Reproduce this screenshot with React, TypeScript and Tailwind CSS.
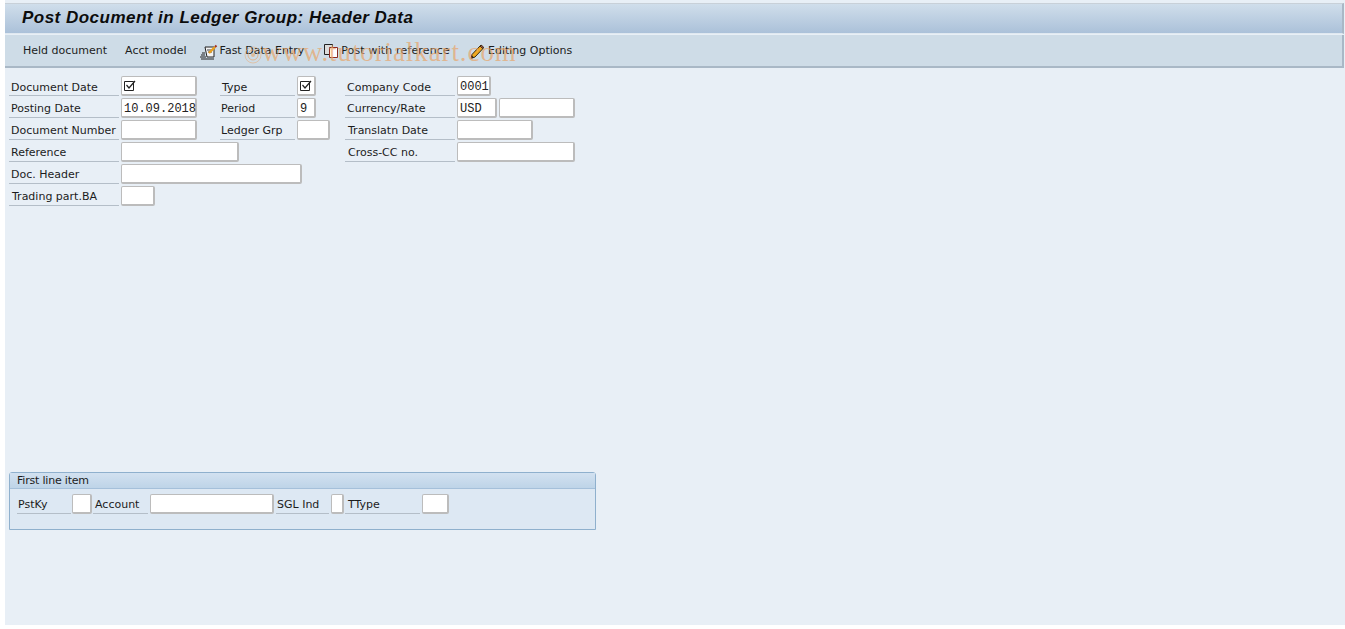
import type { ReactNode } from 'react';

const UI_FONT = "font-['DejaVu_Sans',sans-serif] text-[11px] text-[#1c1c1c]";

function Label({ width, children, className = '' }: { width: string; children: ReactNode; className?: string }) {
  return (
    <div className={`${width} h-5 shrink-0 border-b border-[#b4bec8] pt-[3px] leading-4 whitespace-nowrap ${className || 'pl-[2px]'}`}>
      {children}
    </div>
  );
}

function Field({ width, children, className = '' }: { width: string; children?: ReactNode; className?: string }) {
  return (
    <div
      className={`${width} h-5 shrink-0 rounded-[2px] border border-[#bcbcbc] border-b-2 border-r-2 bg-white pt-px pl-[2px] font-['Liberation_Mono',monospace] text-[12px] leading-[18px] whitespace-nowrap text-[#222222] ${className}`}
    >
      {children}
    </div>
  );
}

function CheckMark() {
  return (
    <svg className="mt-[2px]" width="12" height="12" viewBox="0 0 12 12" fill="none">
      <path d="M0.5 1.5H9.5V10.5H0.5Z" stroke="#222222" />
      <path d="M2.5 5L5 8L11 1" stroke="#222222" strokeWidth="1.2" />
    </svg>
  );
}

function FastEntryIcon() {
  return (
    <svg width="18" height="16" viewBox="0 0 18 16" fill="none">
      <path d="M5 3H14V13H7Z" fill="#f4f4f4" stroke="#222222" />
      <path d="M7 6H12M8 8H12" stroke="#444444" />
      <path d="M9 9L15 3" stroke="#e8a020" strokeWidth="2.4" />
      <path d="M15 3L16.5 1.5" stroke="#a03020" strokeWidth="2" />
      <path d="M2 9H5M1 11H5M0 13H6M1 15H14" stroke="#222222" />
    </svg>
  );
}

function CopyIcon() {
  return (
    <svg width="15" height="15" viewBox="0 0 15 15" fill="none">
      <path d="M0.5 0.5H8.5V10.5H0.5Z" fill="#dcdcdc" stroke="#222222" />
      <path d="M5.5 3.5H13.5V13.5H5.5Z" fill="#ffffff" stroke="#8c2a20" />
    </svg>
  );
}

function PencilIcon() {
  return (
    <svg width="14" height="16" viewBox="0 0 14 16" fill="none">
      <path d="M1 14.5L2 10.5L10 2L13 4.5L5 13Z" fill="#f0a820" stroke="#3a2a10" />
      <path d="M10 2L11 1L13.5 3L13 4.5Z" fill="#d07070" stroke="#3a2a10" />
      <path d="M1 14.5L2 11.5L4 13.5Z" fill="#222222" />
    </svg>
  );
}

function WatermarkLogo() {
  return (
    <svg className="pointer-events-none absolute top-[46px] left-[244px]" width="18" height="18" viewBox="0 0 18 18" fill="none">
      <circle cx="9" cy="9" r="8" stroke="#e8b080" strokeOpacity="0.6" />
      <circle cx="9" cy="9" r="5" stroke="#e8a468" strokeOpacity="0.7" />
      <circle cx="9" cy="9" r="2" fill="#e8a468" fillOpacity="0.6" />
    </svg>
  );
}

export default function App() {
  return (
    <div className={`relative h-[629px] w-[1345px] overflow-hidden bg-white ${UI_FONT}`}>
      <div className="ml-[5px] flex h-[625px] flex-col bg-[#e8eff6] pt-[3px]">
        {/* title bar */}
        <div className="mr-px mb-px flex h-[31px] shrink-0 items-center border-y border-r-2 border-t-[#c8d0d8] border-b-[#dfe8f0] border-r-[#a9b8c6] bg-gradient-to-b from-[#d0deeb] to-[#abc1d9] pb-[2px] pl-[17px]">
          <span className="font-['Liberation_Sans',sans-serif] text-[17px] font-bold italic tracking-[0.48px] text-[#0c0c0c]">
            Post Document in Ledger Group: Header Data
          </span>
        </div>

        {/* toolbar */}
        <div className="mr-px flex h-[33px] shrink-0 items-center border-r-2 border-b-2 border-r-[#a9b8c6] border-b-[#a9b8c6] bg-[#cedce7] pt-[2px] pl-[18px]">
          <span>Held document</span>
          <span className="ml-[18px]">Acct model</span>
          <span className="ml-[13px] flex items-center gap-[2px]">
            <FastEntryIcon />
            Fast Data Entry
          </span>
          <span className="ml-[20px] flex items-center gap-[2px] tracking-[0.15px]">
            <CopyIcon />
            Post with reference
          </span>
          <span className="ml-[20px] flex items-center gap-1">
            <PencilIcon />
            Editing Options
          </span>
        </div>

        {/* header fields */}
        <div className="flex flex-col gap-[2px] pt-2 pl-1">
          <div className="flex">
            <Label width="w-[110px]" className="!pt-1 pl-[2px]">Document Date</Label>
            <Field width="w-[76px]" className="ml-[2px]"><CheckMark /></Field>
            <Label width="w-[75px]" className="ml-[23px] !pt-1 pl-[2px]">Type</Label>
            <Field width="w-[19px]" className="ml-[2px]"><CheckMark /></Field>
            <Label width="w-[110px]" className="ml-[29px] !pt-1 pl-[2px]">Company Code</Label>
            <Field width="w-[34px]" className="ml-[2px]">0001</Field>
          </div>
          <div className="flex">
            <Label width="w-[110px]">Posting Date</Label>
            <Field width="w-[76px]" className="ml-[2px]">10.09.2018</Field>
            <Label width="w-[75px]" className="ml-[23px] pl-px">Period</Label>
            <Field width="w-[19px]" className="ml-[2px]">9</Field>
            <Label width="w-[110px]" className="ml-[29px] pl-[2px]">Currency/Rate</Label>
            <Field width="w-[40px]" className="ml-[2px]">USD</Field>
            <Field width="w-[76px]" className="ml-[2px]" />
          </div>
          <div className="flex">
            <Label width="w-[110px]">Document Number</Label>
            <Field width="w-[76px]" className="ml-[2px]" />
            <Label width="w-[75px]" className="ml-[23px] pl-px">Ledger Grp</Label>
            <Field width="w-[33px]" className="ml-[2px]" />
            <Label width="w-[110px]" className="ml-[15px] pl-[3px]">Translatn Date</Label>
            <Field width="w-[76px]" className="ml-[2px]" />
          </div>
          <div className="flex">
            <Label width="w-[110px]">Reference</Label>
            <Field width="w-[118px]" className="ml-[2px]" />
            <Label width="w-[110px]" className="ml-[106px] pl-[3px]">Cross-CC no.</Label>
            <Field width="w-[118px]" className="ml-[2px]" />
          </div>
          <div className="flex">
            <Label width="w-[110px]">Doc. Header</Label>
            <Field width="w-[181px]" className="ml-[2px]" />
          </div>
          <div className="flex">
            <Label width="w-[110px]" className="pl-[3px]">Trading part.BA</Label>
            <Field width="w-[34px]" className="ml-[2px]" />
          </div>
        </div>

        {/* first line item group */}
        <div className="mt-[266px] ml-1 h-[58px] w-[587px] rounded-t-[3px] border border-[#8fb0cd] bg-[#dde8f3]">
          <div className="h-4 border-b border-[#a5c0da] bg-gradient-to-b from-[#d2e1f0] to-[#bed4e8] pl-[7px] leading-[16px] tracking-[-0.2px]">
            First line item
          </div>
          <div className="mt-[5px] flex pl-[7px]">
            <Label width="w-[54px]" className="pl-px">PstKy</Label>
            <Field width="w-[20px]" className="ml-px" />
            <Label width="w-[55px]" className="ml-px pl-[2px]">Account</Label>
            <Field width="w-[124px]" className="ml-[2px]" />
            <Label width="w-[53px]" className="ml-[2px] pl-px">SGL Ind</Label>
            <Field width="w-[13px]" className="ml-[2px]" />
            <Label width="w-[75px]" className="ml-px pl-[3px]">TType</Label>
            <Field width="w-[27px]" className="ml-[2px]" />
          </div>
        </div>
      </div>

      {/* watermark */}
      <WatermarkLogo />
      <div className="pointer-events-none absolute top-[38px] left-[262px] font-['Liberation_Serif',serif] text-[27px] leading-7 tracking-[0.9px] whitespace-nowrap text-[#e8a468]/70">
        www.tutorialkart.com
      </div>
    </div>
  );
}
